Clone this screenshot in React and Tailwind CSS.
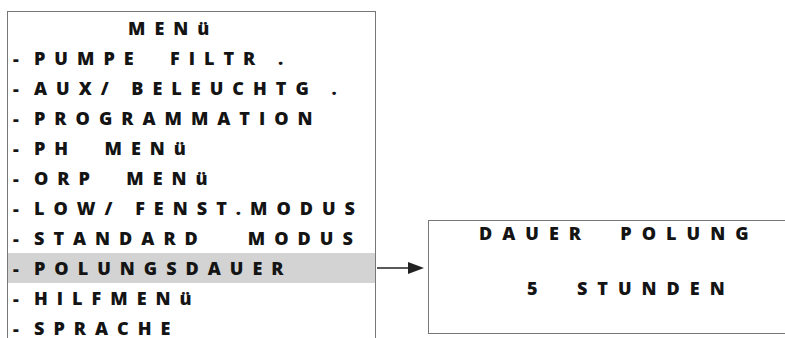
const MENU_ITEMS = [
  "PUMPE  FILTR .",
  "AUX/ BELEUCHTG .",
  "PROGRAMMATION",
  "PH  MENü",
  "ORP  MENü",
  "LOW/ FENST.MODUS",
  "STANDARD   MODUS",
  "POLUNGSDAUER",
  "HILFMENü",
  "SPRACHE",
];

const ACTIVE = "POLUNGSDAUER";

function MenuRow({ label }) {
  const active = label === ACTIVE;
  return (
    <div
      className={`flex h-[30px] items-center pl-[5px] whitespace-pre ${
        active ? "bg-[#d3d3d3]" : ""
      }`}
    >
      <span className="w-[21px] shrink-0">-</span>
      <span className="tracking-[9px]">{label}</span>
    </div>
  );
}

function Arrow() {
  return (
    <svg width="47" height="14" viewBox="0 0 47 14" className="block">
      <line x1="0" y1="7" x2="33" y2="7" stroke="#222" strokeWidth="1.6" />
      <polygon points="31,1 47,7 31,13" fill="#222" />
    </svg>
  );
}

export default function App() {
  return (
    <div className="flex h-[338px] w-[785px] items-start overflow-hidden bg-white font-['Open_Sans',sans-serif] text-[18px] font-extrabold text-[#141414]">
      {/* menu list */}
      <div className="ml-[7px] mt-[11px] h-[340px] w-[369px] shrink-0 overflow-hidden border border-b-0 border-[#777] pt-[1px]">
        <div className="flex h-[30px] items-center pl-[120px] tracking-[9px]">MENü</div>
        {MENU_ITEMS.map((item) => (
          <MenuRow key={item} label={item} />
        ))}
      </div>

      {/* arrow */}
      <div className="ml-[1px] mt-[261px] shrink-0">
        <Arrow />
      </div>

      {/* detail screen */}
      <div className="ml-[4px] mt-[220px] h-[114px] w-[360px] shrink-0 border border-r-0 border-[#777]">
        <div className="flex h-[24px] items-center whitespace-pre pl-[50px] tracking-[10px]">DAUER  POLUNG</div>
        <div className="mt-[31px] flex h-[24px] items-center whitespace-pre pl-[98px] tracking-[10px]">5  STUNDEN</div>
      </div>
    </div>
  );
}
